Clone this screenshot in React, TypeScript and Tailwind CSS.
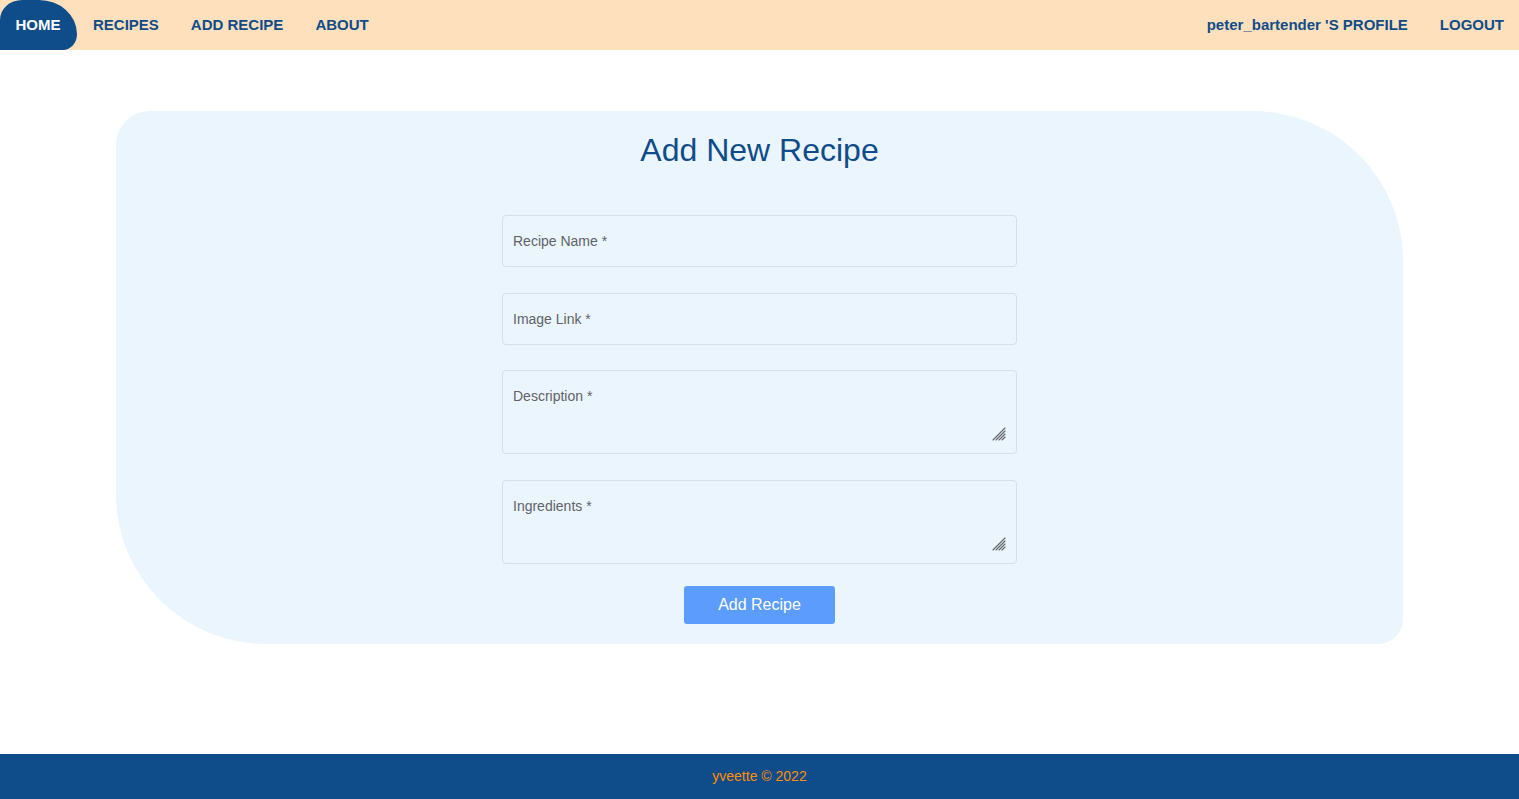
import React from "react";

function Grip() {
  return (
    <svg
      className="pointer-events-none absolute bottom-[12px] right-[10px]"
      width="16"
      height="16"
      viewBox="0 0 16 16"
    >
      <g stroke="#5f6368" strokeWidth="1.1" strokeLinecap="round">
        <line x1="2" y1="14" x2="14" y2="2" />
        <line x1="5" y1="14" x2="14" y2="5" />
        <line x1="8" y1="14" x2="14" y2="8" />
        <line x1="11" y1="14" x2="14" y2="11" />
      </g>
    </svg>
  );
}

export default function App() {
  const inputCls =
    "w-full rounded-[4px] border border-[#d6dfe8] bg-[#ebf5fe] px-[10px] text-[14px] text-[#333] placeholder:text-[#5f6368] outline-none";
  return (
    <div className="flex min-h-[799px] flex-col bg-white font-['Liberation_Sans',Arial,sans-serif]">
      <header className="flex h-[50px] items-center justify-between bg-[#ffe0bd] pr-[15px]">
        <nav className="flex h-full items-center text-[15px] font-bold text-[#0f4c8a]">
          <a className="flex h-full w-[77px] items-center justify-center rounded-[22px_38px_14px_0/20px_34px_16px_0] bg-[#0f4c8a] pr-[1px] text-white">
            HOME
          </a>
          <div className="ml-[16px] flex items-center gap-[32px]">
            <a>RECIPES</a>
            <a>ADD RECIPE</a>
            <a>ABOUT</a>
          </div>
        </nav>
        <nav className="flex items-center gap-[32px] text-[15px] font-bold text-[#0f4c8a]">
          <a>peter_bartender 'S PROFILE</a>
          <a>LOGOUT</a>
        </nav>
      </header>

      <main className="flex flex-1 justify-center px-[116px] pb-[110px] pt-[61px]">
        <div className="flex h-[533px] w-full flex-col items-center rounded-[34px_150px_25px_150px] bg-[#ebf5fe] pt-[17px]">
          <h1 className="text-[32px] leading-[44px] text-[#0f4c8a]">Add New Recipe</h1>
          <form className="mt-[43px] flex w-[515px] flex-col items-center gap-[26px]">
            <input className={`${inputCls} h-[52px]`} placeholder="Recipe Name *" />
            <input className={`${inputCls} h-[52px]`} placeholder="Image Link *" />
            <div className="relative -mt-[1px] w-full">
              <textarea
                className={`${inputCls} block h-[84px] resize-none pt-[16px] leading-[18px]`}
                placeholder="Description *"
              />
              <Grip />
            </div>
            <div className="relative w-full">
              <textarea
                className={`${inputCls} block h-[84px] resize-none pt-[16px] leading-[18px]`}
                placeholder="Ingredients *"
              />
              <Grip />
            </div>
            <button
              type="button"
              className="-mt-[4px] h-[38px] w-[151px] rounded-[3px] bg-[#5b9cfd] text-[16px] text-white"
            >
              Add Recipe
            </button>
          </form>
        </div>
      </main>

      <footer className="flex h-[45px] items-center justify-center bg-[#0f4c8a] text-[14px] text-[#ff8c00]">
        yveette © 2022
      </footer>
    </div>
  );
}
